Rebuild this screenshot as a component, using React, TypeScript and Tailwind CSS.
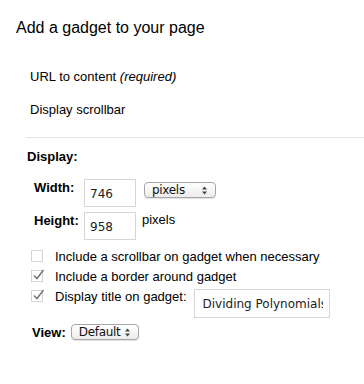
import React from "react";

const Arrows = () => (
  <svg width="7" height="9" viewBox="0 0 7 9" className="shrink-0">
    <path d="M3.5 0.5 L6 3.5 H1 Z" fill="#444" />
    <path d="M3.5 8.5 L6 5.5 H1 Z" fill="#444" />
  </svg>
);

const MacSelect = ({ label, w }: { label: string; w: string }) => (
  <div
    className={`${w} h-[16px] flex items-center justify-between pl-[7px] pr-[7px] rounded-[4px] border border-[#a6a6a6] bg-gradient-to-b from-white to-[#ececec] shadow-[0_1px_1px_rgba(0,0,0,0.12)] text-[12px] leading-[14px] text-[#111] font-['DejaVu_Sans',sans-serif]`}
  >
    <span className="tracking-[-0.3px]">{label}</span>
    <Arrows />
  </div>
);

const Check = ({ checked }: { checked: boolean }) => (
  <div className="relative w-[12px] h-[12px] mt-[1px] border border-[#d4d4d4] bg-white shrink-0">
    {checked && (
      <svg width="14" height="13" viewBox="0 0 14 13" className="absolute left-[0px] -top-[3px]">
        <path d="M2 7.5 L5 10.5 L11.5 2" fill="none" stroke="#777" strokeWidth="1.5" />
      </svg>
    )}
  </div>
);

const App = () => {
  return (
    <div className="w-[364px] h-[384px] bg-white text-black text-[13px] font-['Liberation_Sans',Arial,sans-serif] overflow-hidden">
      <h1 className="pl-4 pt-[18px] text-[16px] leading-[20px] font-normal">Add a gadget to your page</h1>

      <div className="pl-[30px] mt-[31px] leading-[16px]">
        URL to content <i>(required)</i>
      </div>
      <div className="pl-[30px] mt-[17px] leading-[16px]">Display scrollbar</div>

      <div className="ml-[26px] mt-[19px] border-t border-[#e3e3e3]" />

      <div className="pl-[27px] mt-[11px] font-bold leading-[16px]">Display:</div>

      <div className="pl-[34px] mt-[14px] flex flex-col gap-[5px]">
        <div className="flex items-start">
          <div className="w-[50px] font-bold leading-[16px] mt-[1px]">Width:</div>
          <div className="w-[52px] h-[28px] border border-[#d6d6d6] pl-[5px] pt-[7px] text-[12px] leading-[14px] text-[#222] font-['DejaVu_Sans',sans-serif]">
            746
          </div>
          <div className="ml-[8px] mt-[3px]">
            <MacSelect label="pixels" w="w-[72px]" />
          </div>
        </div>
        <div className="flex items-start">
          <div className="w-[50px] font-bold leading-[16px] mt-[1px]">Height:</div>
          <div className="w-[52px] h-[28px] border border-[#d6d6d6] pl-[5px] pt-[7px] text-[12px] leading-[14px] text-[#222] font-['DejaVu_Sans',sans-serif]">
            958
          </div>
          <div className="ml-[6px] leading-[16px]">pixels</div>
        </div>
      </div>

      <div className="pl-[31px] mt-[9px] flex flex-col">
        <div className="flex items-start h-[20px]">
          <Check checked={false} />
          <span className="ml-[12px] leading-[16px]">Include a scrollbar on gadget when necessary</span>
        </div>
        <div className="flex items-start h-[20px]">
          <Check checked={true} />
          <span className="ml-[12px] leading-[16px]">Include a border around gadget</span>
        </div>
        <div className="flex items-start">
          <Check checked={true} />
          <span className="ml-[12px] leading-[16px]">Display title on gadget:</span>
          <div className="ml-[7px] w-[136px] h-[29px] border border-[#d6d6d6] pl-[8px] pr-[6px] pt-[7px]">
            <div className="w-full overflow-hidden whitespace-nowrap text-[12px] leading-[14px] text-[#222] font-['DejaVu_Sans',sans-serif]">
              Dividing Polynomials
            </div>
          </div>
        </div>
      </div>

      <div className="pl-[32px] mt-[6px] flex items-start">
        <span className="font-bold leading-[16px] mt-[1px]">View:</span>
        <div className="ml-[5px]">
          <MacSelect label="Default" w="w-[68px]" />
        </div>
      </div>
    </div>
  );
};

export default App;
